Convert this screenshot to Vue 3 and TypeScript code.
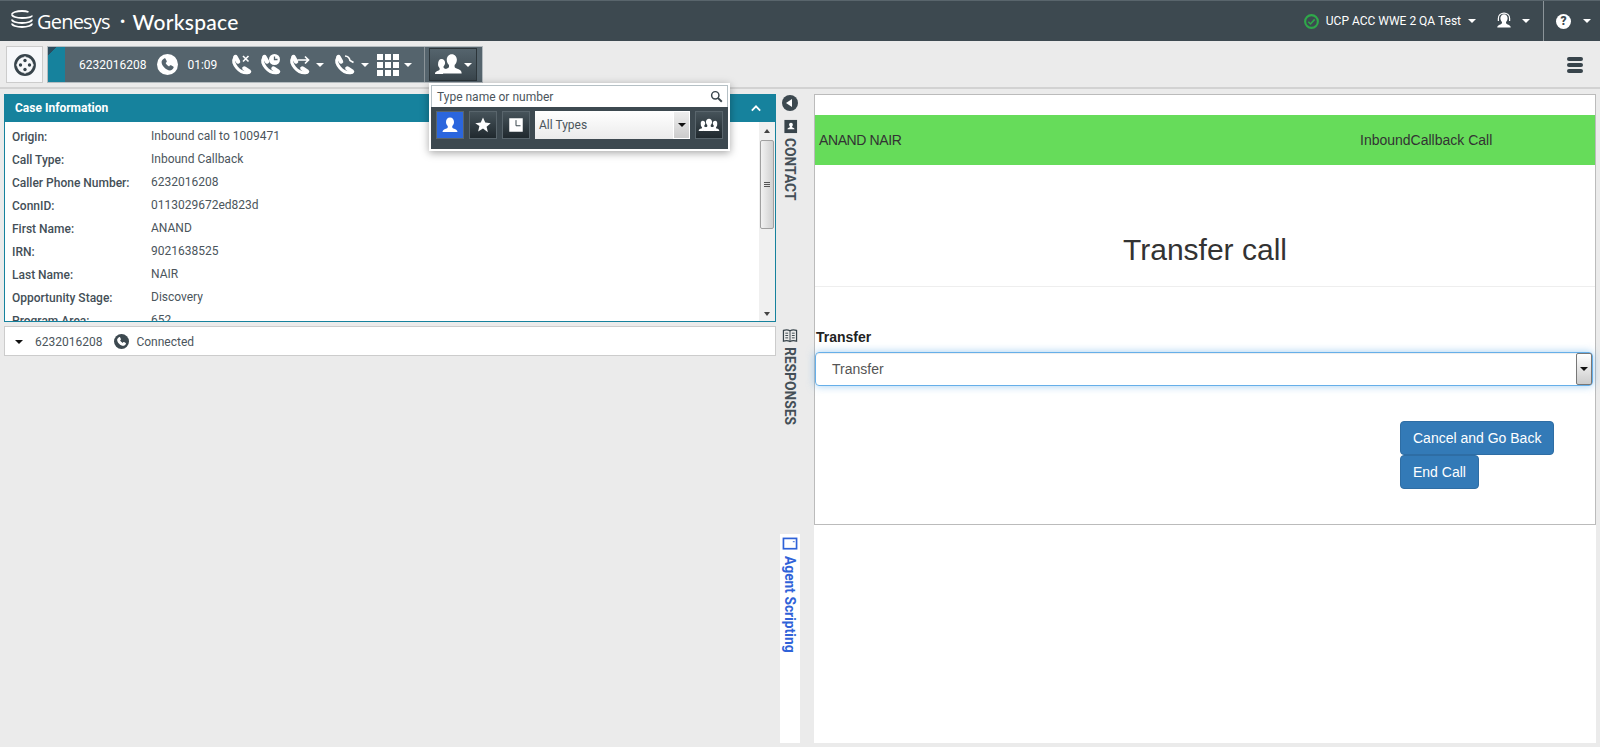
<template>
  <div class="page">
    <svg class="defs" width="0" height="0">
      <symbol id="phone" viewBox="0 0 24 24">
        <path d="M6.600 2.500c.8-.6 1.700-.4 2.200.4l1.900 3.400c.4.700.2 1.500-.4 2L9 9.500c.9 2.200 3.300 4.600 5.500 5.500l1.200-1.300c.5-.6 1.300-.8 2-.4l3.400 1.900c.8.500 1 1.400.4 2.200-1.400 2.200-3.300 4.100-5.600 4.100C9.800 21.500 2.500 14.200 2.500 8.100c0-2.300 1.900-4.200 4.100-5.600z" />
      </symbol>
      <symbol id="handset" viewBox="0 0 24 24">
        <path d="M5.500 5C2.500 10 10 21 19.500 19.500" fill="none" stroke="#fff" stroke-width="3" stroke-linecap="round" />
        <path d="M6.500 4L9 8.500" fill="none" stroke="#fff" stroke-width="4.500" stroke-linecap="round" />
        <path d="M15.500 15.500L20 18.500" fill="none" stroke="#fff" stroke-width="4.500" stroke-linecap="round" />
      </symbol>
      <symbol id="person" viewBox="0 0 24 24">
        <path d="M12 3c2.900 0 4.800 2.300 4.800 5.300 0 2-.9 3.800-2.100 4.900v1.600c0 .7.500 1 1.400 1.400 2.500 1 4.900 1.700 4.900 4.300H3c0-2.600 2.400-3.300 4.900-4.300.9-.4 1.400-.7 1.400-1.400v-1.600C8.100 12.100 7.200 10.300 7.200 8.300 7.200 5.300 9.100 3 12 3z" />
      </symbol>
      <symbol id="team" viewBox="0 0 32 24">
        <path d="M8 6c2.400 0 3.800 1.900 3.800 4.100 0 1.500-.6 2.900-1.600 3.800v1.300c0 .6.300.8 1 1.100 1 .4 2 .7 2.800 1.200-2.500 1-4 2-4.500 4.500H1c0-2.300 2-2.900 3.900-3.700.7-.3 1.100-.5 1.100-1.100v-1.300c-1-.9-1.700-2.300-1.700-3.800C4.300 7.900 5.600 6 8 6z" />
        <path d="M19 1c3.300 0 5.400 2.700 5.400 6 0 2.300-1 4.300-2.400 5.500v1.900c0 .8.600 1.100 1.600 1.500 2.900 1.200 5.900 1.900 5.900 5.600H8.500c0-3.700 3-4.400 5.900-5.600 1-.4 1.600-.7 1.600-1.500v-1.900C14.600 11.300 13.600 9.300 13.600 7c0-3.300 2.100-6 5.400-6z" />
      </symbol>
    </svg>

    <header class="topbar">
      <div class="brand">
        <svg class="logo" viewBox="0 0 24 24" width="24" height="24">
          <g fill="none" stroke="#fff" stroke-width="1.800">
            <path d="M2 6.500c0-2 4.500-3.500 10-3.500 3 0 5 .4 6.500 1" />
            <path d="M2 6.500c0 2 4.500 3.500 10 3.500s10-1 10-2.500" />
            <path d="M2 11.500c0 2 4.500 3.500 10 3.500s10-1.500 10-3.500" />
            <path d="M2 15.500c0 2 4.500 3.500 10 3.500s10-1.500 10-3.500" />
          </g>
        </svg>
        <span class="genesys">Genesys</span>
        <span class="dot">•</span>
        <span class="workspace">Workspace</span>
      </div>
      <div class="top-right">
        <svg class="status" viewBox="0 0 16 16" width="17" height="17">
          <circle cx="8" cy="8" r="6" fill="none" stroke="#2fa84a" stroke-width="2" />
          <path d="M5 8.200l2.100 2.100L11 6" fill="none" stroke="#2fa84a" stroke-width="1.500" />
        </svg>
        <span class="agent-name">UCP ACC WWE 2 QA Test</span>
        <i class="caret"></i>
        <svg class="headset" viewBox="0 0 24 24" width="18" height="18">
          <use href="#person" fill="#fff" />
          <path d="M4.500 12V8.500C4.500 4 8 1.500 12 1.500S19.500 4 19.500 8.500V12" fill="none" stroke="#fff" stroke-width="1.600" />
        </svg>
        <i class="caret caret-user"></i>
        <div class="help">
          <span class="help-icon">?</span>
          <i class="caret"></i>
        </div>
      </div>
    </header>

    <div class="toolbar">
      <button class="home-btn">
        <svg viewBox="0 0 24 24" width="24" height="24">
          <circle cx="12" cy="12" r="9.500" fill="none" stroke="#38444b" stroke-width="2.800" />
          <g stroke="#f7f8fa" stroke-width="2.400">
            <path d="M3.500 12h4M20.500 12h-4M12 3.500v1M12 20.500v-1" />
          </g>
          <g fill="#38444b">
            <circle cx="12" cy="7.500" r="1.700" /><circle cx="12" cy="16.500" r="1.700" />
            <circle cx="7.500" cy="12" r="1.700" /><circle cx="16.500" cy="12" r="1.700" />
          </g>
        </svg>
      </button>

      <div class="call-bar">
        <div class="call-tab"></div>
        <span class="call-number">6232016208</span>
        <span class="round-phone">
          <svg viewBox="0 0 24 24" width="15" height="15"><use href="#phone" fill="#55646d" /></svg>
        </span>
        <span class="call-time">01:09</span>

        <span class="action">
          <svg viewBox="0 0 24 24" width="24" height="24"><use href="#handset" /><path d="M14 3l5.500 5.500M19.500 3L14 8.500" stroke="#fff" stroke-width="1.600" /></svg>
        </span>
        <span class="action">
          <svg viewBox="0 0 24 24" width="24" height="24"><use href="#handset" /><circle cx="16.500" cy="6.500" r="5.500" fill="#fff" /><path d="M16.500 3.500v3h3" fill="none" stroke="#55646d" stroke-width="1.300" /></svg>
        </span>
        <span class="action">
          <svg viewBox="0 0 24 24" width="24" height="24"><use href="#handset" /><path d="M10.500 7h11M18 3.500L21.500 7 18 10.500" fill="none" stroke="#fff" stroke-width="1.700" /></svg>
          <i class="caret"></i>
        </span>
        <span class="action">
          <svg viewBox="0 0 24 24" width="24" height="24"><use href="#handset" /><path d="M13 3c2.500.2 4.500 2 5 4.500l3.500 2" fill="none" stroke="#fff" stroke-width="1.600" /></svg>
          <i class="caret"></i>
        </span>
        <span class="action">
          <span class="grid-icon"><b v-for="n in 9" :key="n"></b></span>
          <i class="caret"></i>
        </span>

        <div class="team-wrap">
          <button class="team-btn">
            <svg viewBox="0 0 32 24" width="30" height="23"><use href="#team" fill="#fff" /></svg>
            <i class="caret"></i>
          </button>
        </div>
      </div>

      <div class="menu-lines"><b></b><b></b><b></b></div>

      <div class="popup">
        <div class="search-row">
          <span>Type name or number</span>
          <svg viewBox="0 0 16 16" width="13" height="13">
            <circle cx="6.500" cy="6.500" r="4.500" fill="none" stroke="#38444b" stroke-width="1.800" />
            <path d="M10 10l4.500 4.500" stroke="#38444b" stroke-width="2.400" />
          </svg>
        </div>
        <div class="filter-row">
          <button class="filter active">
            <svg viewBox="0 0 24 24" width="20" height="20"><use href="#person" fill="#fff" /></svg>
          </button>
          <button class="filter">
            <svg viewBox="0 0 24 24" width="18" height="18"><path d="M12 2l3 6.800 7.300.7-5.500 4.800 1.700 7.200L12 16.800l-6.500 3.700 1.700-7.200L1.700 9.500 9 8.800z" fill="#fff" /></svg>
          </button>
          <button class="filter">
            <svg viewBox="0 0 24 24" width="18" height="18"><path d="M3 3h18v18H3z" fill="#fff" /><path d="M12 5.500V13h6" fill="none" stroke="#38444b" stroke-width="1.300" /></svg>
          </button>
          <div class="types">
            <span>All Types</span>
            <i class="types-arrow"><i class="caret dark"></i></i>
          </div>
          <button class="filter">
            <svg viewBox="0 0 32 24" width="22" height="17">
              <path d="M7 5c2.200 0 3.500 1.800 3.500 3.800 0 1.400-.6 2.700-1.500 3.500v1.200c1 .6 2.500 1 3.800 1.700-2.500 1-4.300 2.300-4.800 4.800H1c0-2.200 1.900-2.800 3.700-3.500.7-.3 1-.5 1-1v-1.200c-1-.8-1.600-2.100-1.600-3.500C3.500 6.800 4.800 5 7 5z" fill="#fff" />
              <path d="M25 5c-2.200 0-3.500 1.800-3.500 3.800 0 1.400.6 2.700 1.500 3.500v1.200c-1 .6-2.500 1-3.800 1.700 2.500 1 4.300 2.300 4.800 4.800H31c0-2.200-1.900-2.800-3.700-3.500-.7-.3-1-.5-1-1v-1.200c1-.8 1.600-2.100 1.600-3.500C28.500 6.800 27.200 5 25 5z" fill="#fff" />
              <path d="M16 2c2.700 0 4.400 2.200 4.400 5 0 1.800-.8 3.400-1.900 4.400v1.700c0 .6.500.9 1.300 1.200 2.300 1 4.700 1.600 4.700 5.700H7.500c0-4.100 2.400-4.700 4.700-5.700.8-.3 1.300-.6 1.300-1.200v-1.700c-1.100-1-1.900-2.600-1.900-4.400 0-2.800 1.700-5 4.400-5z" fill="#fff" />
            </svg>
          </button>
        </div>
      </div>
    </div>

    <main class="content">
      <section class="left">
        <div class="case">
          <div class="case-head">
            <span>Case Information</span>
            <svg viewBox="0 0 12 8" width="10" height="7"><path d="M1 6.500L6 1.500l5 5" fill="none" stroke="#fff" stroke-width="2.200" /></svg>
          </div>
          <div class="case-body">
            <div class="case-rows">
              <div v-for="row in caseRows" :key="row.label" class="case-row">
                <span class="case-label">{{ row.label }}</span>
                <span class="case-value">{{ row.value }}</span>
              </div>
            </div>
            <div class="scroll">
              <i class="scroll-up"></i>
              <div class="scroll-thumb"><b></b><b></b><b></b></div>
              <i class="scroll-down"></i>
            </div>
          </div>
        </div>
        <div class="party">
          <i class="caret dark"></i>
          <span class="party-number">6232016208</span>
          <span class="party-phone">
            <svg viewBox="0 0 24 24" width="11" height="11"><use href="#phone" fill="#fff" /></svg>
          </span>
          <span>Connected</span>
        </div>
      </section>

      <aside class="rail">
        <div class="rail-top">
          <span class="back-circle"><i></i></span>
          <div class="rail-item contact">
            <svg viewBox="0 0 16 16" width="15" height="15">
              <rect x="1.500" y="1" width="13.500" height="14" fill="#38444b" />
              <path d="M8.500 4c1.300 0 2 1 2 2.200 0 .8-.4 1.500-.9 2v.6c1 .5 2.700.7 2.700 2.200H4.700c0-1.500 1.700-1.700 2.700-2.200v-.6c-.5-.5-.9-1.200-.9-2C6.500 5 7.200 4 8.500 4z" fill="#fff" />
            </svg>
            <span class="rail-text">CONTACT</span>
          </div>
        </div>
        <div class="rail-item responses">
          <svg viewBox="0 0 16 16" width="16" height="15">
            <path d="M1 2.500c2.500-.8 5-.8 7 .5 2-1.300 4.500-1.300 7-.5V14c-2.500-.8-5-.8-7 .5-2-1.300-4.500-1.300-7-.5z" fill="none" stroke="#38444b" stroke-width="1.300" />
            <path d="M8 3v11M3 5.500h3M3 8h3M3 10.500h3M10 5.500h3M10 8h3M10 10.500h3" stroke="#38444b" />
          </svg>
          <span class="rail-text">RESPONSES</span>
        </div>
        <div class="rail-item scripting">
          <svg viewBox="0 0 16 16" width="16" height="15">
            <rect x="1" y="1.500" width="14" height="11" fill="none" stroke="#2f62d8" stroke-width="1.800" />
            <path d="M11 5h2" stroke="#2f62d8" />
          </svg>
          <span class="rail-text">Agent Scripting</span>
        </div>
      </aside>

      <section class="right">
        <div class="frame">
          <div class="green-bar">
            <span class="green-name">ANAND NAIR</span>
            <span class="green-type">InboundCallback Call</span>
          </div>
          <h1 class="title">Transfer call</h1>
          <div class="form">
            <label class="form-label">Transfer</label>
            <div class="select">
              <span>Transfer</span>
              <i class="select-arrow"><i class="caret dark"></i></i>
            </div>
            <div class="buttons">
              <button class="btn">Cancel and Go Back</button>
              <button class="btn">End Call</button>
            </div>
          </div>
        </div>
      </section>
    </main>
  </div>
</template>

<script setup lang="ts">
interface CaseRow {
  label: string
  value: string
}

const caseRows: CaseRow[] = [
  { label: 'Origin:', value: 'Inbound call to 1009471' },
  { label: 'Call Type:', value: 'Inbound Callback' },
  { label: 'Caller Phone Number:', value: '6232016208' },
  { label: 'ConnID:', value: '0113029672ed823d' },
  { label: 'First Name:', value: 'ANAND' },
  { label: 'IRN:', value: '9021638525' },
  { label: 'Last Name:', value: 'NAIR' },
  { label: 'Opportunity Stage:', value: 'Discovery' },
  { label: 'Program Area:', value: '652' }
]
</script>

<style>
html,
body {
  margin: 0;
  background: #ebebeb;
  overflow: hidden;
}
</style>

<style scoped>
.page {
  width: 1600px;
  height: 747px;
  display: flex;
  flex-direction: column;
  background: #ebebeb;
  font-family: Roboto, "Liberation Sans", sans-serif;
  font-size: 12px;
  color: #444f57;
  overflow: hidden;
}
.defs {
  position: absolute;
}
.caret {
  display: inline-block;
  width: 0;
  height: 0;
  border-left: 4px solid transparent;
  border-right: 4px solid transparent;
  border-top: 4px solid #fff;
}
.caret.dark {
  border-top-color: #111;
}
button {
  font-family: inherit;
}

.topbar {
  height: 40px;
  flex: none;
  border-top: 1px solid #59656c;
  background: #3d4950;
  display: flex;
  justify-content: space-between;
  align-items: center;
  color: #fff;
}
.brand {
  display: flex;
  align-items: center;
  padding-left: 10px;
}
.logo {
  margin-top: -3px;
}
.genesys {
  margin-left: 3px;
  font-family: "Open Sans", sans-serif;
  font-weight: 400;
  font-size: 20px;
  letter-spacing: -0.8px;
}
.dot {
  margin-left: 10px;
  font-size: 17px;
}
.workspace {
  margin-left: 7px;
  font-family: Lato, sans-serif;
  font-weight: 500;
  font-size: 21px;
  letter-spacing: 0.3px;
}
.top-right {
  display: flex;
  align-items: center;
}
.status {
  margin-right: 6px;
}
.agent-name {
  font-size: 12px;
  margin-right: 7px;
}
.headset {
  margin-left: 19px;
}
.caret-user {
  margin-left: 9px;
}
.help {
  height: 40px;
  width: 57px;
  margin-left: 13px;
  box-sizing: border-box;
  border-left: 1px solid #8b9499;
  display: flex;
  align-items: center;
  padding-left: 12px;
  gap: 12px;
}
.help-icon {
  width: 15px;
  height: 15px;
  border-radius: 50%;
  background: #fff;
  color: #3d4950;
  font-size: 12px;
  font-weight: 900;
  line-height: 15px;
  text-align: center;
}

.toolbar {
  position: relative;
  height: 48px;
  flex: none;
  box-sizing: border-box;
  border-bottom: 2px solid #d2d2d2;
  display: flex;
  align-items: flex-start;
  padding: 5px 0 0 6px;
}
.home-btn {
  width: 37px;
  height: 37px;
  padding: 0;
  background: #f7f8fa;
  border: 1px solid #ccc;
  display: flex;
  align-items: center;
  justify-content: center;
}
.call-bar {
  margin-left: 4px;
  height: 37px;
  width: 436px;
  box-sizing: border-box;
  border: 1px solid #b5bcc0;
  background: #55646d;
  display: flex;
  align-items: center;
  color: #fff;
}
.call-tab {
  align-self: stretch;
  width: 17px;
  background: linear-gradient(135deg, #2c4c5e 0 6px, #16829d 6px);
}
.call-number {
  margin-left: 14px;
  font-size: 12px;
}
.round-phone {
  margin-left: 11px;
  width: 21px;
  height: 21px;
  border-radius: 50%;
  background: #fff;
  display: flex;
  align-items: center;
  justify-content: center;
}
.call-time {
  margin-left: 9px;
  margin-right: 12px;
}
.action {
  display: flex;
  align-items: center;
  gap: 5px;
  margin-right: 5px;
}
.action .caret {
  margin-right: 3px;
}
.grid-icon {
  width: 22px;
  height: 22px;
  display: grid;
  grid-template-columns: repeat(3, 6px);
  grid-auto-rows: 6px;
  gap: 2px;
}
.grid-icon b {
  background: #fff;
}
.team-wrap {
  margin-left: auto;
  align-self: stretch;
  border-left: 1px solid #8b9499;
  padding: 1px 5px 0 4px;
  background: #55646d;
}
.team-btn {
  width: 48px;
  height: 33px;
  padding: 0 0 0 4px;
  border: 1px solid #2c353a;
  background: linear-gradient(#55646d, #3a464d);
  display: flex;
  align-items: center;
}
.menu-lines {
  margin: 11px 17px 0 auto;
  display: flex;
  flex-direction: column;
  gap: 2px;
}
.menu-lines b {
  display: block;
  width: 16px;
  height: 4px;
  border-radius: 2px;
  background: #38444b;
}

.popup {
  position: absolute;
  left: 429px;
  top: 42px;
  z-index: 5;
  width: 301px;
  box-sizing: border-box;
  background: #3d4950;
  border: 2px solid #fff;
  box-shadow: 0 2px 8px rgba(0, 0, 0, 0.35);
}
.search-row {
  height: 22px;
  box-sizing: border-box;
  background: #fff;
  border: 1px solid #b5c0c5;
  border-bottom: none;
  display: flex;
  justify-content: space-between;
  align-items: center;
  padding: 0 4px 0 5px;
  font-size: 12px;
  color: #4b555c;
}
.filter-row {
  height: 38px;
  display: flex;
  align-items: flex-start;
  padding: 4px 5px 0;
  gap: 5px;
}
.filter {
  width: 28px;
  height: 28px;
  padding: 0;
  border: 1px solid #59656c;
  background: linear-gradient(#46535a, #20292e);
  display: flex;
  align-items: center;
  justify-content: center;
}
.filter.active {
  background: #2b66dd;
}
.types {
  width: 155px;
  height: 28px;
  background: linear-gradient(#fff, #ebebeb);
  display: flex;
  justify-content: space-between;
  align-items: center;
  padding-left: 4px;
  box-sizing: border-box;
  font-size: 12px;
  color: #4b555c;
}
.types-arrow {
  width: 17px;
  height: 28px;
  box-sizing: border-box;
  border: 1px solid #fff;
  background: linear-gradient(#eee, #ccc);
  display: flex;
  align-items: center;
  justify-content: center;
}

.content {
  flex: 1;
  min-height: 0;
  display: flex;
  padding: 5px 4px 4px 4px;
}
.left {
  width: 772px;
  flex: none;
  display: flex;
  flex-direction: column;
  gap: 4px;
}
.case {
  height: 228px;
  box-sizing: border-box;
  display: flex;
  flex-direction: column;
  border: 1px solid #16829d;
  border-top: none;
}
.case-head {
  height: 28px;
  flex: none;
  margin: 0 -1px;
  background: #16829d;
  color: #fff;
  font-weight: 700;
  display: flex;
  justify-content: space-between;
  align-items: center;
  padding: 0 15px 0 11px;
}
.case-body {
  flex: 1;
  min-height: 0;
  background: #fff;
  display: flex;
  overflow: hidden;
}
.case-rows {
  flex: 1;
  padding-top: 2px;
  overflow: hidden;
}
.case-row {
  height: 23px;
  display: flex;
  align-items: center;
  padding-left: 7px;
}
.case-label {
  width: 139px;
  font-weight: 500;
  color: #444f57;
  position: relative;
  top: 1px;
}
.case-value {
  color: #4b555c;
}
.scroll {
  width: 16px;
  background: #f0f0f0;
  display: flex;
  flex-direction: column;
  align-items: center;
  padding: 7px 0 5px;
  box-sizing: border-box;
}
.scroll-up,
.scroll-down {
  width: 0;
  height: 0;
  border-left: 3.500px solid transparent;
  border-right: 3.500px solid transparent;
}
.scroll-up {
  border-bottom: 4px solid #444;
}
.scroll-down {
  margin-top: auto;
  border-top: 4px solid #444;
}
.scroll-thumb {
  margin-top: 7px;
  width: 14px;
  height: 89px;
  flex: none;
  box-sizing: border-box;
  border: 1px solid #a0a0a0;
  border-radius: 2px;
  background: linear-gradient(90deg, #f2f2f2, #d0d0d0);
  display: flex;
  flex-direction: column;
  align-items: center;
  justify-content: center;
  gap: 1px;
}
.scroll-thumb b {
  display: block;
  width: 6px;
  height: 1px;
  background: #555;
}
.party {
  height: 30px;
  box-sizing: border-box;
  background: #fff;
  border: 1px solid #ccc;
  display: flex;
  align-items: center;
  padding: 1px 0 0 10px;
  color: #4b555c;
}
.party-number {
  margin-left: 12px;
}
.party-phone {
  margin: 0 7px 0 12px;
  width: 15px;
  height: 15px;
  border-radius: 50%;
  background: #3d4950;
  display: flex;
  align-items: center;
  justify-content: center;
}

.rail {
  width: 38px;
  flex: none;
  display: flex;
  flex-direction: column;
  align-items: flex-start;
  padding-left: 4px;
  box-sizing: border-box;
}
.rail-top {
  height: 234px;
  flex: none;
  display: flex;
  flex-direction: column;
  align-items: center;
  width: 20px;
  padding-top: 1px;
  box-sizing: border-box;
}
.back-circle {
  width: 16px;
  height: 16px;
  border-radius: 50%;
  background: #3d4950;
  display: flex;
  align-items: center;
  justify-content: center;
  flex: none;
}
.back-circle i {
  width: 0;
  height: 0;
  border-top: 4px solid transparent;
  border-bottom: 4px solid transparent;
  border-right: 6px solid #fff;
  margin-left: -2px;
}
.rail-item {
  width: 20px;
  display: flex;
  flex-direction: column;
  align-items: center;
  gap: 4px;
}
.contact {
  margin-top: 8px;
}
.rail-text {
  writing-mode: vertical-rl;
  font-weight: 700;
  font-size: 13.8px;
  color: #444f57;
  line-height: 16px;
  margin-left: -1px;
}
.responses {
  height: 206px;
  flex: none;
}
.scripting {
  flex: 1;
  padding-top: 3px;
  background: #fff;
  gap: 4px;
}
.scripting .rail-text {
  color: #2f62d8;
}

.right {
  flex: 1;
  background: #fff;
  min-width: 0;
}
.frame {
  height: 431px;
  box-sizing: border-box;
  border: 1px solid #bbb;
  padding-top: 20px;
  font-family: "Liberation Sans", Arial, sans-serif;
  color: #333;
  font-size: 14px;
}
.green-bar {
  height: 50px;
  background: #66dc5a;
  display: flex;
  align-items: center;
  padding-left: 4px;
  color: #333;
}
.green-name {
  width: 541px;
  letter-spacing: -0.4px;
}
.title {
  margin: 0;
  height: 122px;
  box-sizing: border-box;
  border-bottom: 1px solid #eee;
  font-size: 30px;
  font-weight: 500;
  text-align: center;
  padding-top: 68px;
  line-height: 33px;
}
.form {
  padding: 42px 0 0 0;
}
.form-label {
  display: block;
  font-weight: 700;
  color: #222;
  line-height: 16px;
  margin-bottom: 7px;
  padding-left: 1px;
}
.select {
  height: 34px;
  width: 778px;
  box-sizing: border-box;
  border: 1px solid #66afe9;
  border-radius: 4px;
  box-shadow: inset 0 1px 1px rgba(0, 0, 0, 0.075), 0 0 8px rgba(102, 175, 233, 0.6);
  display: flex;
  justify-content: space-between;
  align-items: center;
  padding-left: 16px;
  color: #555;
}
.select-arrow {
  width: 16px;
  height: 32px;
  box-sizing: border-box;
  border: 1px solid #777;
  border-radius: 2px;
  background: linear-gradient(#fff, #ccc);
  display: flex;
  align-items: center;
  justify-content: center;
}
.buttons {
  margin: 35px 0 0 585px;
  display: flex;
  flex-direction: column;
  align-items: flex-start;
}
.btn {
  height: 34px;
  padding: 0 12px;
  background: #337ab7;
  border: 1px solid #2e6da4;
  border-radius: 4px;
  color: #fff;
  font-family: "Liberation Sans", Arial, sans-serif;
  font-size: 14px;
}
</style>
